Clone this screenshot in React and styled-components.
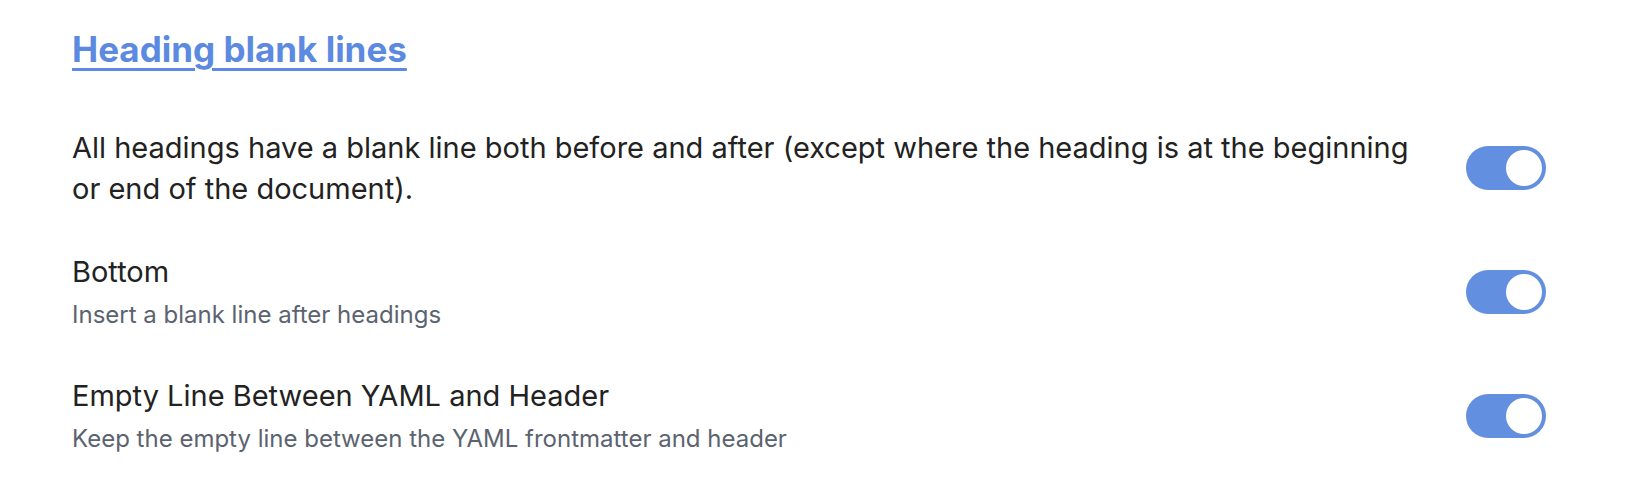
import React from 'react'
import styled, { createGlobalStyle } from 'styled-components'

const GlobalStyle = createGlobalStyle`
  body {
    margin: 0;
    background: #ffffff;
    font-family: Inter, "Noto Sans", sans-serif;
    -webkit-font-smoothing: antialiased;
  }
`

const settings = [
  {
    name: 'All headings have a blank line both before and after (except where the heading is at the beginning or end of the document).',
    on: true,
  },
  { name: 'Bottom', desc: 'Insert a blank line after headings', on: true },
  {
    name: 'Empty Line Between YAML and Header',
    desc: 'Keep the empty line between the YAML frontmatter and header',
    on: true,
  },
]

const Toggle = ({ on }) => (
  <Track $on={on}>
    <Knob $on={on} />
  </Track>
)

const App = () => {
  return (
    <Wrapper>
      <GlobalStyle />
      <Heading href='#'>Heading blank lines</Heading>
      <List>
        {settings.map((s) => (
          <Item key={s.name}>
            <Info>
              <Name>{s.name}</Name>
              {s.desc && <Desc>{s.desc}</Desc>}
            </Info>
            <Control>
              <Toggle on={s.on} />
            </Control>
          </Item>
        ))}
      </List>
    </Wrapper>
  )
}

const Wrapper = styled.div`
  padding: 24px 84px 0 72px;
`
const Heading = styled.a`
  display: inline-block;
  color: #5b8ae0;
  font-size: 35px;
  font-weight: 700;
  text-decoration: underline;
  text-decoration-thickness: 3px;
  text-underline-offset: 6px;
  line-height: 50px;
  vertical-align: top;
`
const List = styled.div`
  margin-top: 32px;
  display: flex;
  flex-direction: column;
`
const Item = styled.div`
  display: flex;
  align-items: center;
  padding: 21px 0;
`
const Info = styled.div`
  flex: 1;
  padding-right: 40px;
`
const Name = styled.div`
  font-size: 29px;
  line-height: 41px;
  color: #222222;
`
const Desc = styled.div`
  font-size: 24px;
  line-height: 36px;
  padding-top: 5px;
  color: #5c6370;
`
const Control = styled.div`
  flex-shrink: 0;
`
const Track = styled.div`
  width: 80px;
  height: 44px;
  border-radius: 22px;
  background: ${(p) => (p.$on ? '#628fdf' : '#cccccc')};
  padding: 4px;
  box-sizing: border-box;
  display: flex;
  justify-content: ${(p) => (p.$on ? 'flex-end' : 'flex-start')};
`
const Knob = styled.div`
  width: 36px;
  height: 36px;
  border-radius: 50%;
  background: #ffffff;
`

export default App
